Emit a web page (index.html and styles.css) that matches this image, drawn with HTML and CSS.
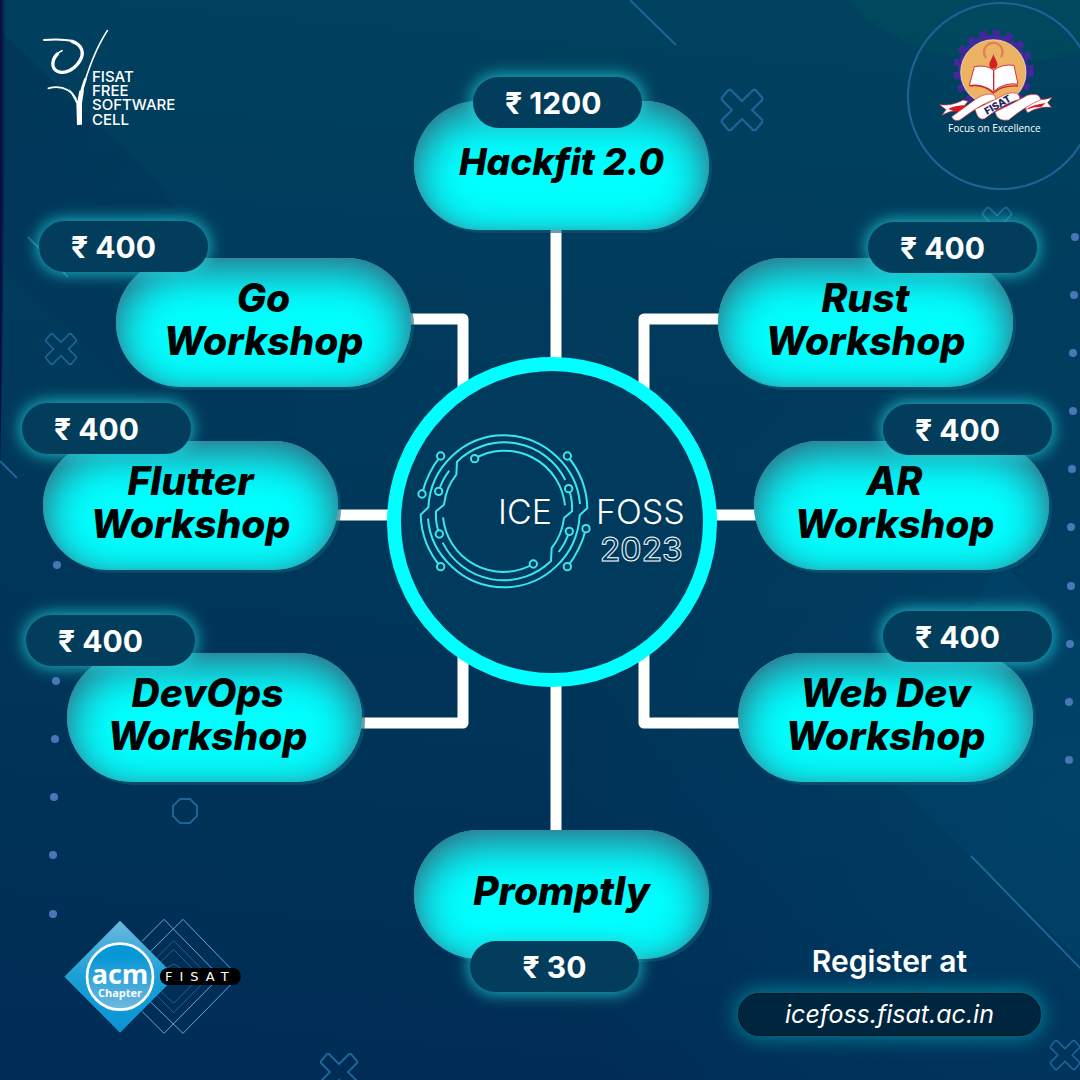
FILE: index.html
```html
<!DOCTYPE html>
<html lang="en">
<head>
<meta charset="utf-8">
<meta name="viewport" content="width=device-width, initial-scale=1">
<title>ICE FOSS 2023</title>
<link rel="stylesheet" href="styles.css">
</head>
<body>
<div class="poster">
  <svg class="backdrop" viewBox="0 0 1080 1080" preserveAspectRatio="xMidYMid slice" aria-hidden="true">
    <defs>
      <linearGradient id="edge" x1="0" x2="1" y1="0" y2="0"><stop offset="0" stop-color="#0a0a3c"/><stop offset="1" stop-color="#0a0a3c" stop-opacity="0"/></linearGradient>
      <linearGradient id="bandA" x1="0" y1="0" x2="1" y2="1"><stop offset="0" stop-color="#002f55" stop-opacity=".5"/><stop offset="1" stop-color="#002f55" stop-opacity="0"/></linearGradient>
      <path id="cross" d="M-18-11l6-7h2L0-8 10-18h2l6 7v2L9 0l9 9v2l-6 7h-2L0 8-10 18h-2l-6-7V9l9-9-9-9z"/>
    </defs>
    <path d="M0 30 L150 175 L300 350 L300 560 L0 260z" fill="url(#bandA)"/>
    <path d="M880 770 L1080 960 V640 L1000 560z" fill="#00507a" opacity=".22"/>
    <ellipse cx="1010" cy="-40" rx="175" ry="102" fill="#00535c" opacity=".4"/>
    <path d="M0 0H6L3 300 0 480z" fill="url(#edge)"/>
    <g class="outline">
      <circle cx="1001" cy="96" r="93"/>
      <path d="M630 0l46 45M0 461l17 17M28 237l40 40M971 856l112 115"/>
      <use href="#cross" transform="translate(742 110) scale(1.12)"/>
      <use href="#cross" transform="translate(61 349) scale(.84)"/>
      <use href="#cross" transform="translate(997 222) scale(.8)"/>
      <use href="#cross" transform="translate(339 1072) scale(1)"/>
      <use href="#cross" transform="translate(1065 1055) scale(.8)"/>
      <path d="M180 799h10l7 7v10l-7 7h-10l-7-7v-10z"/>
    </g>
    <g class="dots">
      <circle cx="1075" cy="237" r="4"/><circle cx="1074" cy="295" r="4"/><circle cx="1073" cy="353" r="4"/><circle cx="1073" cy="411" r="4"/><circle cx="1072" cy="469" r="4"/><circle cx="1071" cy="527" r="4"/><circle cx="1071" cy="586" r="4"/><circle cx="1070" cy="644" r="4"/><circle cx="1069" cy="702" r="4"/><circle cx="1069" cy="760" r="4"/>
      <circle cx="57" cy="565" r="4"/><circle cx="56" cy="681" r="4"/><circle cx="55" cy="739" r="4"/><circle cx="54" cy="797" r="4"/><circle cx="53" cy="855" r="4"/><circle cx="53" cy="914" r="4"/>
    </g>
  </svg>

  <header class="top">
    <svg class="cell-logo" viewBox="32 28 150 100" role="img" aria-label="FISAT Free Software Cell">
      <g transform="scale(.33333)" fill="none" stroke="#fff" stroke-linecap="round" stroke-linejoin="round">
        <path stroke-width="6" d="M132 120Q190 116 218 124"/>
        <path stroke-width="10" d="M216 124C246 134 254 158 240 182 224 208 196 224 172 214 152 204 156 178 172 162"/>
        <path stroke-width="5" d="M172 162Q178 155 186 152"/>
        <path stroke-width="5" d="M322 92C292 138 262 214 244 282"/>
        <path stroke-width="8" d="M256 238Q246 265 241 290"/>
        <path stroke-width="5" d="M145 265C180 256 208 264 228 296"/>
        <path fill="#fff" stroke="none" d="M206 266Q224 280 232 304L238 272 252 270 246 310 246 374 231 375 229 310z"/>
      </g>
      <g class="cell-name"><text x="92" y="82">FISAT</text><text x="92" y="96">FREE</text><text x="92" y="110">SOFTWARE</text><text x="92" y="125">CELL</text></g>
    </svg>

    <svg class="fisat-logo" viewBox="936 28 120 108" role="img" aria-label="FISAT, Focus on Excellence">
      <g transform="translate(900 0) scale(.33333)">
        <circle cx="280" cy="210" r="106" fill="#41299a"/>
        <circle cx="280" cy="210" r="113" fill="none" stroke="#41299a" stroke-width="16" stroke-dasharray="22 18.8"/>
        <circle cx="280" cy="217" r="98" fill="#edb364" stroke="#fff0c8" stroke-width="2"/>
        <path d="M258 174A28 28 0 1 1 303 172" fill="none" stroke="#df8055" stroke-width="7"/>
        <path d="M280 162C286 180 294 186 292 197 288 209 270 209 268 197 267 184 276 179 280 162z" fill="#d32025"/>
        <path d="M223 200Q260 193 281 211 305 191 342 196L354 252Q310 247 280 275 248 250 208 256z" fill="#fff" stroke="#d3303a" stroke-width="3"/>
        <path d="M281 211V272M209 258Q250 252 280 279 306 255 354 258" fill="none" stroke="#c32a35" stroke-width="4"/>
        <path d="M119 314Q155 319 190 300L204 304 180 332Q150 330 126 346L138 329z" fill="#fff" stroke="#d3303a" stroke-width="2"/>
        <path d="M456 292L443 308 454 322Q418 318 384 338 374 330 378 322L410 296Q432 303 456 292z" fill="#fff" stroke="#d3303a" stroke-width="2"/>
        <path d="M145 327Q160 317 200 315L180 336Q158 334 145 327zM225 328Q240 318 285 312L262 330zM285 334Q312 318 345 316L322 336zM376 330Q392 315 437 309L425 320Q400 320 376 330z" fill="#d71920"/>
        <path d="M155 350L225 299Q260 274 284 286L288 300Q260 300 180 360 162 366 155 350z" fill="#fff" stroke="#d3303a" stroke-width="2"/>
        <path d="M225 328Q280 302 318 282 360 270 360 298 320 306 254 356 234 364 225 328z" fill="#fff" stroke="#d3303a" stroke-width="2"/>
        <path d="M285 336Q340 310 382 286 420 276 422 300 382 314 326 360 292 366 285 336z" fill="#fff" stroke="#d3303a" stroke-width="2"/>
      </g>
      <text class="ribbon-text" transform="translate(987 115) rotate(-30)">FISAT</text>
      <text class="motto" x="948" y="132">Focus on Excellence</text>
    </svg>
  </header>

  <main class="diagram">
    <svg class="links" viewBox="0 0 1080 1080" aria-hidden="true">
      <g fill="none" stroke="#fff" stroke-width="11" stroke-linejoin="round">
        <path d="M556 225V360M556 685V835M405 319H463V390M358 723H463V655M722 319H644V390M742 723H644V655M334 515H390M715 515H758"/>
      </g>
      <circle cx="552" cy="522" r="158" fill="#003a5d" stroke="#0ff" stroke-width="14"/>
      <defs>
        <g id="circuit">
          <path d="M182 650A252 252 0 0 1 122 494L145 472A228 228 0 0 1 372 256C495 256 592 354 600 462"/>
          <path d="M178 552Q166 520 168 484L192 464Q198 412 229 374L231 335A204 204 0 0 1 556 390"/>
          <path d="M284 326A182 182 0 0 1 555 466"/>
          <path d="M208 362Q186 390 176 424M182 318Q142 368 126 432"/>
          <g fill="#003a5d"><circle cx="182" cy="650" r="11"/><circle cx="178" cy="552" r="11"/><circle cx="284" cy="326" r="11"/><circle cx="176" cy="424" r="11"/><circle cx="182" cy="318" r="11"/><circle cx="126" cy="432" r="11"/></g>
        </g>
      </defs>
      <g transform="translate(380 350) scale(.33333)" fill="none" stroke="#3be6f0" stroke-width="6" stroke-linejoin="round">
        <use href="#circuit"/><use href="#circuit" transform="rotate(180 372 484)"/>
      </g>
      <g class="event-name"><text x="498" y="524">ICE</text><text x="596" y="524">FOSS</text></g>
      <text class="event-year" x="600" y="561">2023</text>
    </svg>

    <article class="node hackfit"><h2>Hackfit 2.0</h2><p class="fee">₹ 1200</p></article>
    <article class="node go"><h2>Go<br>Workshop</h2><p class="fee">₹ 400</p></article>
    <article class="node rust"><h2>Rust<br>Workshop</h2><p class="fee">₹ 400</p></article>
    <article class="node flutter"><h2>Flutter<br>Workshop</h2><p class="fee">₹ 400</p></article>
    <article class="node ar"><h2>AR<br>Workshop</h2><p class="fee">₹ 400</p></article>
    <article class="node devops"><h2>DevOps<br>Workshop</h2><p class="fee">₹ 400</p></article>
    <article class="node webdev"><h2>Web Dev<br>Workshop</h2><p class="fee">₹ 400</p></article>
    <article class="node promptly"><h2>Promptly</h2><p class="fee">₹ 30</p></article>
  </main>

  <footer class="bottom">
    <svg class="acm-logo" viewBox="64 916 180 120" role="img" aria-label="ACM Chapter FISAT">
      <defs>
        <linearGradient id="acm" x1="0" y1="0" x2="0" y2="1"><stop offset="0" stop-color="#6db9df"/><stop offset=".5" stop-color="#1a9fd6"/><stop offset="1" stop-color="#0b94d4"/></linearGradient>
        <linearGradient id="disc" x1="0" y1="0" x2="0" y2="1"><stop offset=".2" stop-color="#0797d7"/><stop offset="1" stop-color="#71b9df"/></linearGradient>
      </defs>
      <g transform="translate(0 720) scale(.33333)">
        <g fill="none" stroke="#5fa8de" stroke-width="3">
          <path d="M426 664L492 598 660 770 492 940 426 874M450 696L549 598 716 770 549 940 450 844"/>
          <path stroke="#285c8d" d="M440 744L521 662 628 770 521 878 440 796M456 750L521 688 600 770 521 850 456 790M500 744L521 732 542 744"/>
        </g>
        <path d="M360 602L527 770 360 938 193 770z" fill="url(#acm)"/>
        <circle cx="360" cy="770" r="99" fill="url(#disc)" stroke="#fff" stroke-width="8"/>
        <rect x="480" y="744" width="242" height="51" rx="24"/>
      </g>
      <text class="acm-name" x="120" y="984">acm</text>
      <text class="acm-sub" x="120" y="997">Chapter</text>
      <text class="acm-place" x="165" y="981">FISAT</text>
    </svg>
    <div class="register">
      <p>Register at</p>
      <a href="https://icefoss.fisat.ac.in">icefoss.fisat.ac.in</a>
    </div>
  </footer>
</div>
</body>
</html>
```
FILE: styles.css
```css
* { box-sizing: border-box; }

body {
  margin: 0;
  font-family: Inter, "Liberation Sans", sans-serif;
  color: #fff;
  background: #003459;
}

h2, p { margin: 0; }

.poster {
  position: relative;
  display: flex;
  flex-direction: column;
  justify-content: space-between;
  min-height: 100vh;
  overflow: hidden;
  background:
    radial-gradient(circle at 100% 75%, rgba(0, 82, 120, .35), transparent 40%),
    linear-gradient(185deg, #00435f 0%, #003c5d 25%, #003659 58%, #002c55 100%);
}

.backdrop {
  position: absolute;
  inset: 0;
  width: 100%;
  height: 100%;
}
.outline { fill: none; stroke: #1d6498; stroke-width: 2; }
.dots { fill: #4a76b8; }

.top, .bottom {
  position: relative;
  display: flex;
  justify-content: space-between;
}
.top { padding: 28px 24px 0 32px; }
.bottom { align-items: flex-end; padding: 0 39px 44px 64px; }

.cell-logo { width: 150px; height: 100px; }
.fisat-logo { width: 120px; height: 108px; }
.acm-logo { width: 180px; height: 120px; }

svg text { fill: #fff; }
.cell-name { font-size: 15px; font-weight: 500; }
.ribbon-text { font-size: 10px; font-weight: 800; }
svg .ribbon-text { fill: #1d2460; }
.motto { font-family: "Open Sans", sans-serif; font-size: 10px; }
.acm-name, .acm-sub {
  font-family: "Open Sans", sans-serif;
  font-weight: 700;
  text-anchor: middle;
}
.acm-name { font-size: 27px; }
.acm-sub { font-size: 11px; }
.acm-place {
  font-family: "DejaVu Sans", sans-serif;
  font-size: 13px;
  letter-spacing: 7px;
}
.event-name { font-size: 34px; font-weight: 300; }
.event-year { font-size: 33px; font-weight: 500; }
svg .event-year { fill: #003a5d; stroke: #fff; stroke-width: 1; }

/* Node places are measured from the middle of the poster. */
.diagram { position: absolute; inset: 0; }
.links {
  position: absolute;
  left: calc(50% - 540px);
  top: calc(50% - 540px);
  width: 1080px;
  height: 1080px;
}
.node {
  position: absolute;
  display: flex;
  align-items: center;
  justify-content: center;
  width: 295px;
  height: 129px;
  padding-bottom: 8px;
  border-radius: 65px;
  color: #000;
  background: #0ff;
  box-shadow:
    inset 0 12px 44px rgba(52, 92, 118, .95),
    inset 0 0 12px rgba(90, 160, 172, .4),
    3px 3px 0 rgba(10, 92, 118, .6);
}
.node h2 {
  font-size: 39px;
  line-height: 43px;
  font-weight: 800;
  font-style: italic;
  text-align: center;
}
.fee {
  position: absolute;
  width: 169px;
  height: 51px;
  padding-left: 32px;
  border-radius: 26px;
  font-size: 30px;
  line-height: 53px;
  font-weight: 700;
  color: #fff;
  background: #023e5c;
  box-shadow: 0 0 16px 2px rgba(34, 214, 222, .8);
}

.hackfit { left: calc(50% - 126px); top: calc(50% - 439px); }
.hackfit h2 { font-size: 37px; }
.hackfit .fee { left: 59px; top: -24px; }
.go { left: calc(50% - 424px); top: calc(50% - 282px); }
.go .fee { left: -77px; top: -37px; }
.rust { left: calc(50% + 178px); top: calc(50% - 282px); }
.rust .fee { left: 150px; top: -36px; }
.flutter { left: calc(50% - 497px); top: calc(50% - 99px); }
.flutter .fee { left: -21px; top: -38px; }
.ar { left: calc(50% + 214px); top: calc(50% - 99px); }
.ar .fee { left: 129px; top: -37px; }
.devops { left: calc(50% - 473px); top: calc(50% + 113px); }
.devops .fee { left: -41px; top: -38px; }
.webdev { left: calc(50% + 198px); top: calc(50% + 113px); }
.webdev .fee { left: 145px; top: -42px; }
.ar, .devops { padding-right: 14px; }
.promptly { left: calc(50% - 126px); top: calc(50% + 290px); }
.promptly .fee { left: 56px; top: 111px; padding: 0; text-align: center; }

.register { width: 303px; text-align: center; }
.register p {
  padding-bottom: 12px;
  font-size: 30px;
  line-height: 40px;
  font-weight: 600;
}
.register a {
  display: block;
  border: 1px solid #06141f;
  border-radius: 22px;
  font-size: 25px;
  line-height: 41px;
  font-style: italic;
  color: #fff;
  text-decoration: none;
  background: #00253f;
  box-shadow: 0 0 20px 2px rgba(0, 186, 198, .6);
}

/* Narrow windows: the nodes become a plain column. */
@media (max-width: 1040px) {
  .diagram {
    position: relative;
    display: flex;
    flex-direction: column;
    align-items: center;
    gap: 56px;
    padding: 64px 16px;
  }
  .links { display: none; }
  .node { position: relative; left: auto; top: auto; }
  .node .fee { left: 64px; top: -32px; }
  .bottom { flex-wrap: wrap; gap: 32px; padding: 0 24px 40px; }
}
```
